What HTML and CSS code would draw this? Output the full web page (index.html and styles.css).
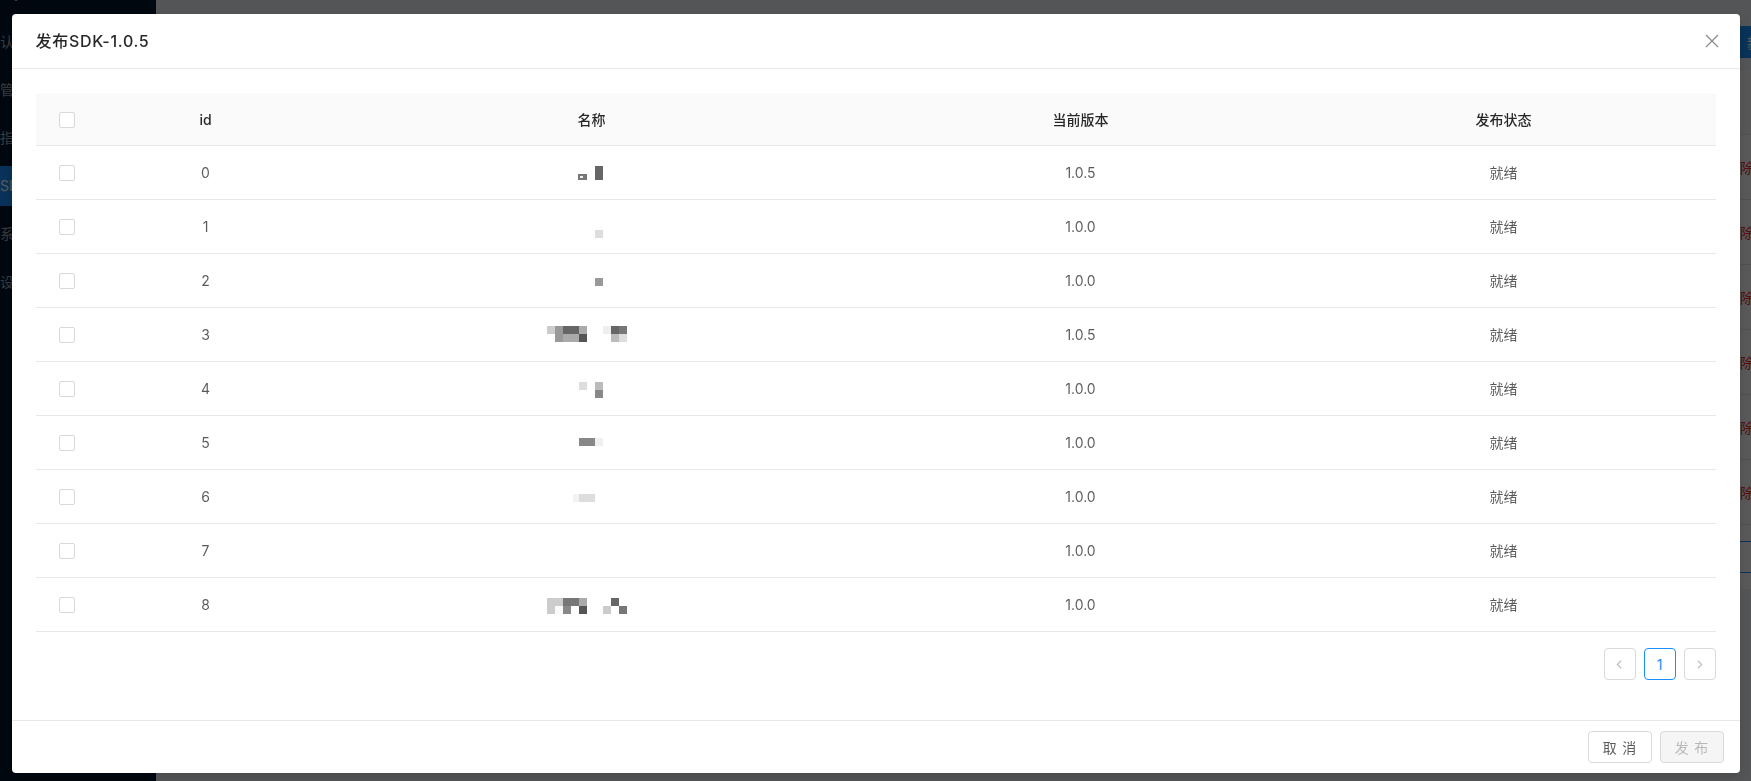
FILE: index.html
```html
<!DOCTYPE html>
<html lang="zh-CN">
<head>
    <meta charset="UTF-8">
    <meta name="viewport" content="width=device-width, initial-scale=1.0">
    <title>SDK管理</title>
    <link rel="stylesheet" href="styles.css">
</head>
<body>
    <div class="layout">
        <aside class="sider">
            <ul class="menu">
                <li class="menu-item">监控 <span class="arrow">⌄</span></li>
                <li class="menu-item">认证管理</li>
                <li class="menu-item">管理中心</li>
                <li class="menu-item">指标配置</li>
                <li class="menu-item selected">SDK管理</li>
                <li class="menu-item">系统设置</li>
                <li class="menu-item">设备日志</li>
            </ul>
        </aside>
        <main class="main">
            <div class="toolbar">
                <button class="bg-btn">新建</button>
            </div>
            <div class="card">
                <div class="bg-row head"></div>
                <div class="bg-row"><a>删除</a></div>
                <div class="bg-row"><a>删除</a></div>
                <div class="bg-row"><a>删除</a></div>
                <div class="bg-row"><a>删除</a></div>
                <div class="bg-row"><a>删除</a></div>
                <div class="bg-row"><a>删除</a></div>
                <div class="bg-pager"><span class="bg-page"></span></div>
            </div>
        </main>
    </div>

    <div class="mask"></div>

    <div class="modal-wrap">
        <div class="modal">
            <div class="modal-header">
                <div class="modal-title">发布SDK-1.0.5</div>
                <button class="modal-close">
                    <svg width="14" height="14" viewBox="0 0 14 14"><path d="M1 1L13 13M13 1L1 13" stroke="currentColor" stroke-width="1.3" fill="none"/></svg>
                </button>
            </div>
            <div class="modal-body">
                <table class="table">
                    <colgroup>
                        <col class="col-check">
                        <col class="col-id">
                        <col class="col-name">
                        <col class="col-version">
                        <col class="col-status">
                    </colgroup>
                    <thead>
                        <tr>
                            <th><span class="checkbox"></span></th>
                            <th>id</th>
                            <th>名称</th>
                            <th>当前版本</th>
                            <th>发布状态</th>
                        </tr>
                    </thead>
                    <tbody>
                        <tr>
                            <td><span class="checkbox"></span></td>
                            <td>0</td>
                            <td><svg class="mosaic" width="90" height="24" viewBox="0 0 90 24"><rect x="48" y="6" width="8" height="14" fill="#666"/><rect x="31" y="14" width="9" height="6" fill="#777"/><rect x="33" y="16" width="3" height="2" fill="#eee"/></svg></td>
                            <td>1.0.5</td>
                            <td>就绪</td>
                        </tr>
                        <tr>
                            <td><span class="checkbox"></span></td>
                            <td>1</td>
                            <td><svg class="mosaic" width="90" height="24" viewBox="0 0 90 24"><rect x="48" y="16" width="8" height="8" fill="#ddd"/></svg></td>
                            <td>1.0.0</td>
                            <td>就绪</td>
                        </tr>
                        <tr>
                            <td><span class="checkbox"></span></td>
                            <td>2</td>
                            <td><svg class="mosaic" width="90" height="24" viewBox="0 0 90 24"><rect x="48" y="10" width="8" height="8" fill="#999"/></svg></td>
                            <td>1.0.0</td>
                            <td>就绪</td>
                        </tr>
                        <tr>
                            <td><span class="checkbox"></span></td>
                            <td>3</td>
                            <td><svg class="mosaic" width="90" height="24" viewBox="0 0 90 24"><rect x="0" y="4" width="8" height="8" fill="#ccc"/><rect x="8" y="4" width="8" height="16" fill="#999"/><rect x="16" y="4" width="16" height="8" fill="#666"/><rect x="16" y="12" width="16" height="8" fill="#aaa"/><rect x="32" y="4" width="8" height="8" fill="#aaa"/><rect x="32" y="12" width="8" height="8" fill="#555"/><rect x="56" y="4" width="8" height="8" fill="#eee"/><rect x="64" y="4" width="8" height="8" fill="#666"/><rect x="72" y="4" width="8" height="8" fill="#777"/><rect x="64" y="12" width="8" height="8" fill="#bbb"/><rect x="72" y="12" width="8" height="8" fill="#ddd"/></svg></td>
                            <td>1.0.5</td>
                            <td>就绪</td>
                        </tr>
                        <tr>
                            <td><span class="checkbox"></span></td>
                            <td>4</td>
                            <td><svg class="mosaic" width="90" height="24" viewBox="0 0 90 24"><rect x="32" y="6" width="8" height="8" fill="#ddd"/><rect x="48" y="6" width="8" height="8" fill="#bbb"/><rect x="48" y="14" width="8" height="8" fill="#888"/></svg></td>
                            <td>1.0.0</td>
                            <td>就绪</td>
                        </tr>
                        <tr>
                            <td><span class="checkbox"></span></td>
                            <td>5</td>
                            <td><svg class="mosaic" width="90" height="24" viewBox="0 0 90 24"><rect x="32" y="8" width="16" height="8" fill="#888"/><rect x="48" y="8" width="8" height="8" fill="#f0f0f0"/></svg></td>
                            <td>1.0.0</td>
                            <td>就绪</td>
                        </tr>
                        <tr>
                            <td><span class="checkbox"></span></td>
                            <td>6</td>
                            <td><svg class="mosaic" width="90" height="24" viewBox="0 0 90 24"><rect x="26" y="10" width="6" height="8" fill="#f3f3f3"/><rect x="32" y="10" width="16" height="8" fill="#ddd"/></svg></td>
                            <td>1.0.0</td>
                            <td>就绪</td>
                        </tr>
                        <tr>
                            <td><span class="checkbox"></span></td>
                            <td>7</td>
                            <td><svg class="mosaic" width="90" height="24" viewBox="0 0 90 24"></svg></td>
                            <td>1.0.0</td>
                            <td>就绪</td>
                        </tr>
                        <tr>
                            <td><span class="checkbox"></span></td>
                            <td>8</td>
                            <td><svg class="mosaic" width="90" height="24" viewBox="0 0 90 24"><rect x="0" y="6" width="16" height="8" fill="#ccc"/><rect x="16" y="6" width="16" height="8" fill="#777"/><rect x="32" y="6" width="8" height="8" fill="#aaa"/><rect x="0" y="14" width="8" height="8" fill="#ccc"/><rect x="8" y="14" width="8" height="8" fill="#fafafa"/><rect x="16" y="14" width="8" height="8" fill="#888"/><rect x="32" y="14" width="8" height="8" fill="#555"/><rect x="64" y="6" width="8" height="8" fill="#666"/><rect x="56" y="14" width="8" height="8" fill="#ccc"/><rect x="72" y="14" width="8" height="8" fill="#777"/></svg></td>
                            <td>1.0.0</td>
                            <td>就绪</td>
                        </tr>
                    </tbody>
                </table>
                <ul class="pagination">
                    <li class="page-item disabled">
                        <svg width="12" height="12" viewBox="0 0 12 12"><path d="M7.5 2.5L4 6l3.5 3.5" stroke="currentColor" stroke-width="1.1" fill="none"/></svg>
                    </li>
                    <li class="page-item active">1</li>
                    <li class="page-item disabled">
                        <svg width="12" height="12" viewBox="0 0 12 12"><path d="M4.5 2.5L8 6 4.5 9.5" stroke="currentColor" stroke-width="1.1" fill="none"/></svg>
                    </li>
                </ul>
            </div>
            <div class="modal-footer">
                <button class="btn"><span>取消</span></button>
                <button class="btn" disabled><span>发布</span></button>
            </div>
        </div>
    </div>
</body>
</html>
```

FILE: styles.css
```css
* {
    box-sizing: border-box;
}

body {
    margin: 0;
    height: 100vh;
    overflow: hidden;
    font-family: "Inter", "Noto Sans CJK SC", sans-serif;
    font-size: 14px;
    color: rgba(0, 0, 0, 0.65);
    background-color: #f0f2f5;
}

/* page behind the modal */

.layout {
    display: flex;
    height: 100vh;
}

.sider {
    width: 156px;
    flex-shrink: 0;
    background-color: #001529;
}

.menu {
    list-style: none;
    margin: -26px 0 0;
    padding: 0;
}

.menu-item {
    height: 40px;
    line-height: 40px;
    margin-bottom: 8px;
    padding-left: 0;
    color: rgba(255, 255, 255, 0.65);
    white-space: nowrap;
    overflow: hidden;
}

.menu-item .arrow {
    float: right;
    margin-right: 16px;
}

.menu-item.selected {
    background-color: #1890ff;
    color: #fff;
}

.main {
    flex: 1;
    margin-right: -24px;
}

.toolbar {
    display: flex;
    justify-content: flex-end;
    padding: 26px 0 0;
    height: 70px;
}

.bg-btn {
    height: 32px;
    width: 40px;
    padding: 0 0 0 12px;
    text-align: left;
    white-space: nowrap;
    border: none;
    border-radius: 4px;
    background-color: #1890ff;
    color: #fff;
    font-size: 14px;
    overflow: hidden;
}

.card {
    background-color: #fff;
}

.bg-row {
    height: 65px;
    display: flex;
    align-items: center;
    justify-content: flex-end;
    border-bottom: 1px solid #e8e8e8;
    padding-right: 21px;
}

.bg-row.head {
    background-color: #fafafa;
}

.bg-row a {
    color: #f5222d;
}

.bg-pager {
    display: flex;
    justify-content: flex-end;
    padding: 16px 6px;
}

.bg-page {
    width: 32px;
    height: 32px;
    border: 1px solid #1890ff;
    border-radius: 4px;
}

/* modal */

.mask {
    position: fixed;
    inset: 0;
    background-color: rgba(0, 0, 0, 0.65);
}

.modal-wrap {
    position: fixed;
    inset: 0;
    padding-top: 14px;
}

.modal {
    width: 1728px;
    margin: 0 auto;
    background-color: #fff;
    border-radius: 4px;
    box-shadow: 0 4px 12px rgba(0, 0, 0, 0.15);
}

.modal-header {
    display: flex;
    justify-content: space-between;
    align-items: center;
    height: 55px;
    padding: 0 0 0 24px;
    border-bottom: 1px solid #e8e8e8;
}

.modal-title {
    font-size: 16px;
    line-height: 22px;
    font-weight: 500;
    letter-spacing: 0.7px;
    color: rgba(0, 0, 0, 0.85);
}

.modal-close {
    width: 56px;
    height: 54px;
    display: flex;
    align-items: center;
    justify-content: center;
    border: none;
    background: none;
    color: rgba(0, 0, 0, 0.45);
    padding: 0;
}

.modal-body {
    padding: 24px;
}

.table {
    width: 100%;
    border-collapse: collapse;
    table-layout: fixed;
}

.col-check { width: 62px; }
.col-id { width: 216px; }
.col-name { width: 556px; }
.col-version { width: 422px; }
.col-status { width: 424px; }

.table th,
.table td {
    padding: 16px;
    line-height: 21px;
    text-align: center;
    border-bottom: 1px solid #e8e8e8;
}

.table th {
    padding-bottom: 15px;
    background-color: #fafafa;
    color: rgba(0, 0, 0, 0.85);
    font-weight: 500;
}

.table th:first-child,
.table td:first-child {
    padding-left: 0;
    padding-right: 0;
}

.checkbox {
    display: inline-block;
    width: 16px;
    height: 16px;
    border: 1px solid #d9d9d9;
    border-radius: 2px;
    background-color: #fff;
    vertical-align: -3px;
}

.mosaic {
    display: block;
    margin: -2px auto -1px;
}

.pagination {
    list-style: none;
    display: flex;
    justify-content: flex-end;
    gap: 8px;
    margin: 16px 0;
    padding: 0;
}

.page-item {
    width: 32px;
    height: 32px;
    display: flex;
    align-items: center;
    justify-content: center;
    border: 1px solid #d9d9d9;
    border-radius: 4px;
    background-color: #fff;
}

.page-item svg {
    width: 13px;
    height: 13px;
}

.page-item.disabled {
    color: rgba(0, 0, 0, 0.25);
}

.page-item.active {
    border-color: #1890ff;
    color: #1890ff;
}

.modal-footer {
    display: flex;
    justify-content: flex-end;
    gap: 8px;
    padding: 10px 16px;
    border-top: 1px solid #e8e8e8;
}

.btn {
    height: 32px;
    width: 64px;
    padding: 0;
    font-family: "Noto Sans CJK SC", sans-serif;
    font-size: 14px;
    border: 1px solid #d9d9d9;
    border-radius: 4px;
    background-color: #fff;
    color: rgba(0, 0, 0, 0.65);
}

.btn span {
    letter-spacing: 0.4em;
    margin-right: -0.4em;
}

.btn:disabled {
    background-color: #f5f5f5;
    color: rgba(0, 0, 0, 0.25);
}
```
